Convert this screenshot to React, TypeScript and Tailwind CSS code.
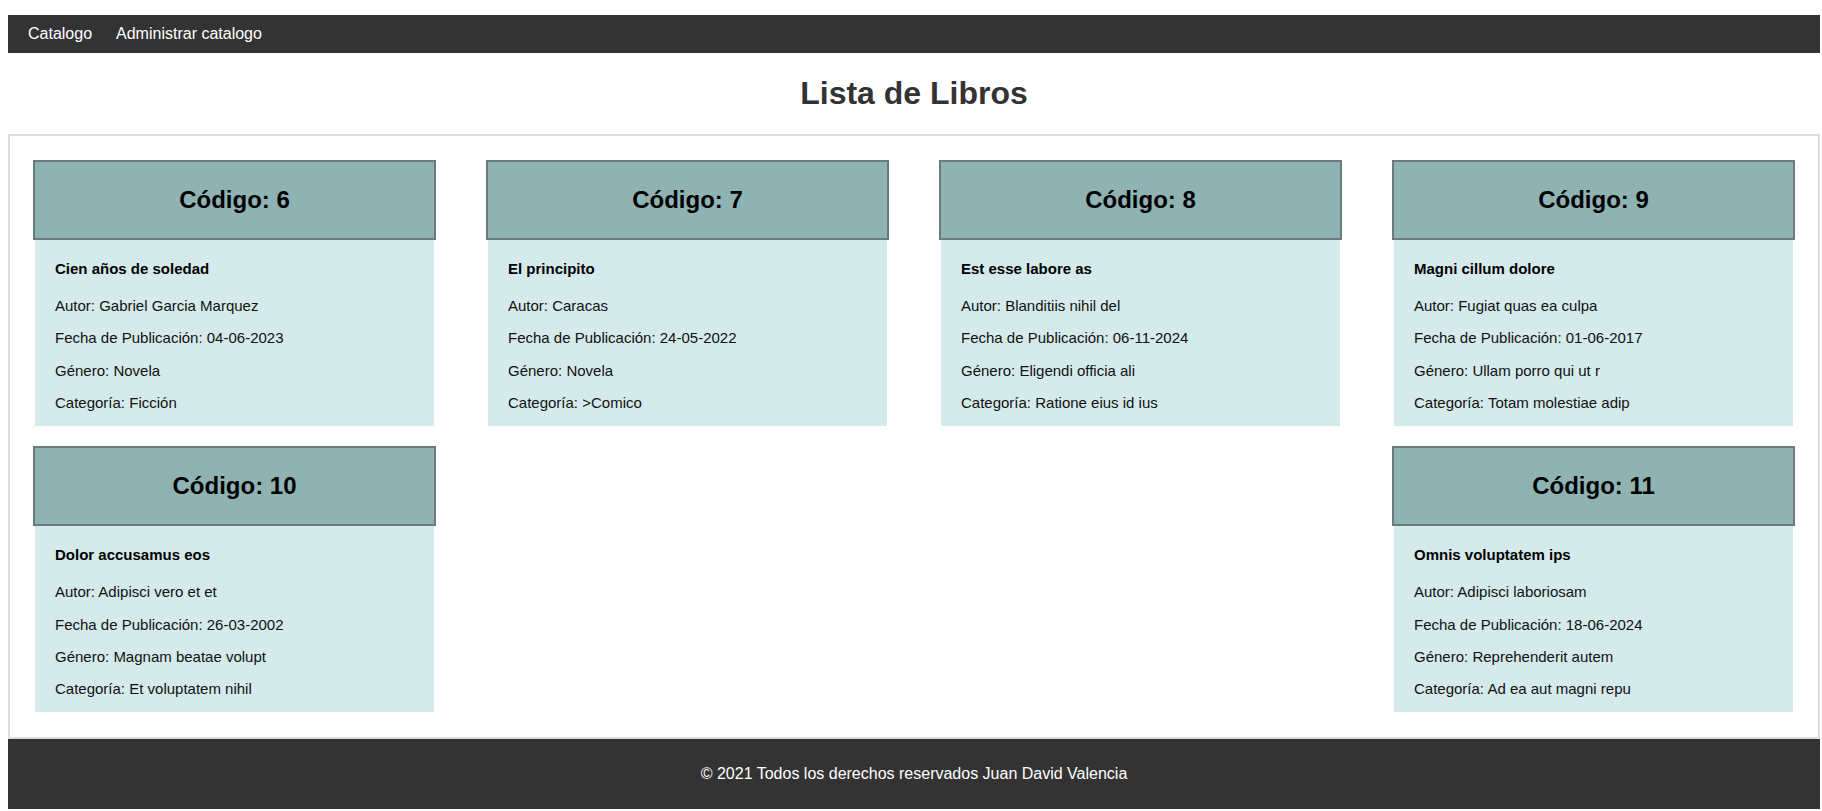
import React from 'react';

type Libro = {
  codigo: number;
  titulo: string;
  autor: string;
  fecha: string;
  genero: string;
  categoria: string;
};

const libros: Libro[] = [
  { codigo: 6, titulo: 'Cien años de soledad', autor: 'Gabriel Garcia Marquez', fecha: '04-06-2023', genero: 'Novela', categoria: 'Ficción' },
  { codigo: 7, titulo: 'El principito', autor: 'Caracas', fecha: '24-05-2022', genero: 'Novela', categoria: '>Comico' },
  { codigo: 8, titulo: 'Est esse labore as', autor: 'Blanditiis nihil del', fecha: '06-11-2024', genero: 'Eligendi officia ali', categoria: 'Ratione eius id ius' },
  { codigo: 9, titulo: 'Magni cillum dolore', autor: 'Fugiat quas ea culpa', fecha: '01-06-2017', genero: 'Ullam porro qui ut r', categoria: 'Totam molestiae adip' },
  { codigo: 10, titulo: 'Dolor accusamus eos', autor: 'Adipisci vero et et', fecha: '26-03-2002', genero: 'Magnam beatae volupt', categoria: 'Et voluptatem nihil' },
  { codigo: 11, titulo: 'Omnis voluptatem ips', autor: 'Adipisci laboriosam', fecha: '18-06-2024', genero: 'Reprehenderit autem', categoria: 'Ad ea aut magni repu' },
];

const LibroCard: React.FC<{ libro: Libro }> = ({ libro }) => (
  <div className="w-[403px]">
    {/* Header */}
    <div className="h-[80px] border-2 border-[#6b7b7b] bg-[#8fb3b3] flex items-center justify-center">
      <h2 className="text-[24px] font-bold text-black leading-[1.15]">Código: {libro.codigo}</h2>
    </div>
    {/* Body */}
    <div className="mx-[2px] bg-[#d5eaeb] px-[20px] pt-[20px] pb-[15px] text-[15px] leading-[1.15] text-[#111]">
      <h4 className="font-bold text-black mb-[20px]">{libro.titulo}</h4>
      <p>Autor: {libro.autor}</p>
      <p className="mt-[15px]">Fecha de Publicación: {libro.fecha}</p>
      <p className="mt-[15px]">Género: {libro.genero}</p>
      <p className="mt-[15px]">Categoría: {libro.categoria}</p>
    </div>
  </div>
);

const App: React.FC = () => {
  return (
    <div className="min-h-screen bg-white pl-[8px] pr-[2px] pt-[15px] font-['Liberation_Sans',Arial,sans-serif]">
      <nav className="h-[38px] bg-[#333333] flex items-center px-[10px] gap-[4px] text-white text-[16px] leading-[1.15]">
        <a className="px-[10px] cursor-pointer">Catalogo</a>
        <a className="px-[10px] cursor-pointer">Administrar catalogo</a>
      </nav>

      <h1 className="text-center text-[32px] font-bold text-[#333333] leading-[1.15] my-[22px]">
        Lista de Libros
      </h1>

      <div className="border-2 border-[#dddddd] px-[23px] pt-[24px] pb-[25px] flex flex-wrap justify-between gap-y-[20px]">
        {libros.map((l) => (
          <LibroCard key={l.codigo} libro={l} />
        ))}
      </div>

      <footer className="h-[70px] bg-[#333333] flex items-center justify-center text-white text-[16px] leading-[1.15]">
        © 2021 Todos los derechos reservados Juan David Valencia
      </footer>
    </div>
  );
};

export default App;
